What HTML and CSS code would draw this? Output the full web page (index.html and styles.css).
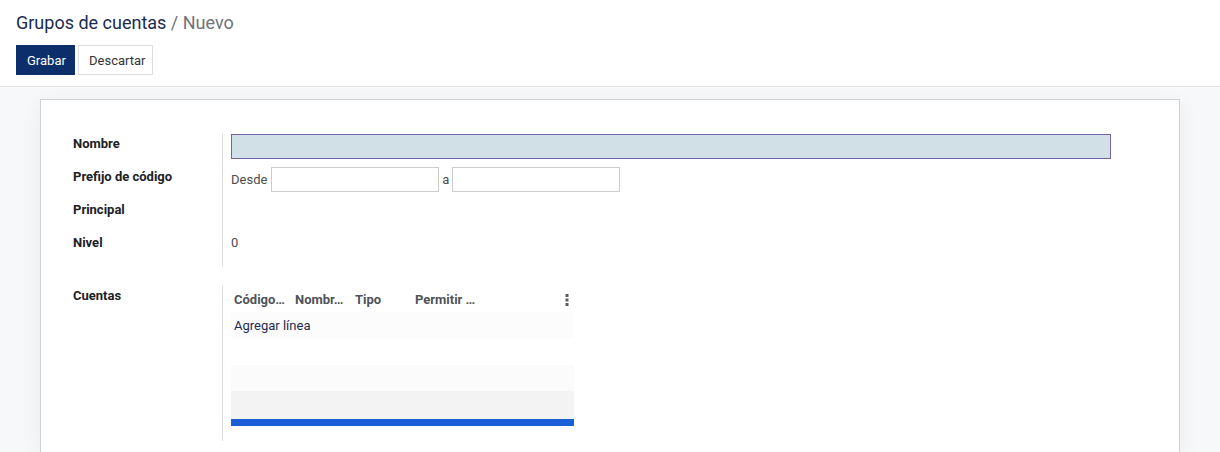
FILE: index.html
```html
<!DOCTYPE html>
<html lang="es">
<head>
<meta charset="utf-8">
<title>Grupos de cuentas / Nuevo</title>
<link rel="stylesheet" href="styles.css">
</head>
<body>
<div class="control-panel">
  <div class="breadcrumb"><span class="crumb">Grupos de cuentas</span><span class="sep"> / </span><span class="current">Nuevo</span></div>
  <div class="buttons">
    <button class="btn btn-primary">Grabar</button>
    <button class="btn btn-secondary">Descartar</button>
  </div>
</div>
<div class="content">
  <div class="sheet">
    <div class="group group-main">
      <div class="labels">
        <div class="label">Nombre</div>
        <div class="label">Prefijo de código</div>
        <div class="label">Principal</div>
        <div class="label">Nivel</div>
      </div>
      <div class="fields">
        <div class="field"><input class="input input-name" type="text"></div>
        <div class="field range"><span class="range-from">Desde</span><input class="input input-small" type="text"><span class="range-to">a</span><input class="input input-small" type="text"></div>
        <div class="field"></div>
        <div class="field">0</div>
      </div>
    </div>
    <div class="group group-accounts">
      <div class="labels">
        <div class="label">Cuentas</div>
      </div>
      <div class="fields">
        <div class="list">
          <div class="list-head">
            <span class="col c1">Código…</span>
            <span class="col c2">Nombr…</span>
            <span class="col c3">Tipo</span>
            <span class="col c4">Permitir …</span>
            <span class="col-opt"><svg width="4" height="12" viewBox="0 0 4 12"><rect x="0.5" y="0" width="3" height="3" fill="#5a5f66"/><rect x="0.5" y="4.5" width="3" height="3" fill="#5a5f66"/><rect x="0.5" y="9" width="3" height="3" fill="#5a5f66"/></svg></span>
          </div>
          <div class="row row-add"><a class="add-line">Agregar línea</a></div>
          <div class="row row-empty"></div>
          <div class="row row-light"></div>
          <div class="row row-grey"></div>
          <div class="list-bar"></div>
        </div>
      </div>
    </div>
  </div>
</div>
</body>
</html>
```
FILE: styles.css
```css
* { box-sizing: border-box; }
html, body { margin: 0; height: 100%; }
body {
  font-family: Roboto, "Noto Sans", sans-serif;
  font-size: 13px;
  color: #4c4c4c;
  background: #f7f8fa;
  overflow: hidden;
}

/* top bar with breadcrumb and actions */
.control-panel {
  background: #fff;
  border-bottom: 1px solid #e2e4e8;
  padding: 10px 16px;
  height: 87px;
}
.breadcrumb {
  font-size: 18px;
  line-height: 26px;
  color: #1b2b4f;
}
.breadcrumb .sep, .breadcrumb .current { color: #6f747a; }
.buttons { display: flex; gap: 3px; margin-top: 9px; }
.btn {
  font-family: inherit;
  font-size: 13px;
  height: 30px;
  padding: 0 10px;
  border: 1px solid transparent;
  border-radius: 0;
  cursor: pointer;
}
.btn-primary { background: #0c2f6c; color: #fff; border-color: #0c2f6c; width: 59px; }
.btn-secondary { background: #fff; color: #333; border-color: #dcdee2; width: 75px; }

/* form sheet */
.content { padding: 12px 40px 0 40px; }
.sheet {
  background: #fff;
  border: 1px solid #cfd1d4;
  border-bottom: none;
  height: 353px;
  padding: 34px 0 0 32px;
  box-shadow: 0 5px 20px rgba(0,0,0,0.06);
}
.group { display: flex; }
.labels {
  width: 150px;
  border-right: 1px solid #dcdcdc;
}
.label {
  font-weight: bold;
  color: #202124;
  height: 33px;
  line-height: 19px;
}
.fields { padding-left: 8px; }
.field {
  height: 33px;
  display: flex;
  align-items: flex-start;
  line-height: 19px;
}
.input {
  font-family: inherit;
  font-size: 13px;
  height: 25px;
  border: 1px solid #cccccc;
  background: #fff;
  margin: 0;
  padding: 0 4px;
  outline: none;
}
.input-name {
  width: 880px;
  background: #d1dfe6;
  border-color: #7563a8;
}
.range-from { margin: 3px 4px 0 0; }
.range-to { margin: 3px 3px 0 3px; }
.input-small { width: 168px; }
.group-main .labels { height: 132px; }

/* one2many list */
.group-accounts { margin-top: 20px; }
.group-accounts .labels { height: 155px; }
.list { width: 343px; }
.list-head {
  height: 26px;
  display: flex;
  align-items: center;
  font-weight: bold;
  color: #4f535a;
  padding-left: 3px;
  position: relative;
}
.col { display: inline-block; }
.c1 { width: 61px; }
.c2 { width: 60px; }
.c3 { width: 60px; }
.c4 { width: 100px; }
.col-opt { position: absolute; right: 5px; top: 8px; line-height: 0; }
.row { height: 27px; }
.row-add { background: #fcfcfc; line-height: 27px; padding-left: 3px; height: 26px; }
.add-line { color: #1b2b4f; }
.row-empty { background: #fff; }
.row-light { background: #fbfbfb; height: 26px; }
.row-grey { background: #f3f3f3; height: 28px; }
.list-bar { height: 7px; background: #1b5fd6; }
```
